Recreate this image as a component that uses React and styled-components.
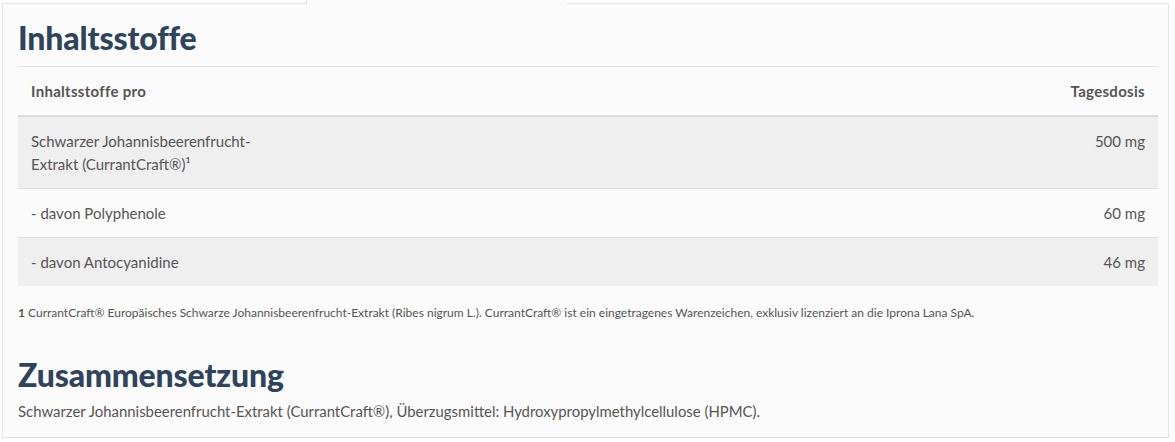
import React from "react";
import styled, { createGlobalStyle } from "styled-components";

const Global = createGlobalStyle`
  html, body { margin: 0; padding: 0; background: #ffffff; }
  body { font-family: Lato, "Noto Sans", sans-serif; color: #555555; }
`;

const Page = styled.div`
  width: 1175px;
  height: 442px;
  box-sizing: border-box;
  padding: 0 6px 0 2px;
  overflow: hidden;
`;

const TabBar = styled.div`
  display: flex;
  height: 4px;
`;

const Tab = styled.div`
  box-sizing: border-box;
  width: ${(p) => (p.$w ? `${p.$w}px` : "auto")};
  flex: ${(p) => (p.$w ? "none" : "1")};
  border-bottom: 1px solid ${(p) => (p.$active ? "transparent" : "#e4e4e4")};
  border-right: ${(p) => (p.$edge ? "1px solid #e4e4e4" : "none")};
  background: ${(p) => (p.$active ? "#fbfbfb" : "#ffffff")};
`;

const Panel = styled.section`
  box-sizing: border-box;
  border: 1px solid #e4e4e4;
  border-top: none;
  background: #fbfbfb;
  padding: 14px 10px 12px 15px;
  height: 434px;
`;

const Heading = styled.h2`
  margin: 0;
  font-family: Lato, "Noto Sans", sans-serif;
  font-weight: 900;
  font-size: 32px;
  line-height: 40px;
  color: #2d445c;
  letter-spacing: -0.15px;
`;

const Table = styled.table`
  width: 100%;
  border-collapse: collapse;
  margin-top: 8px;
  border-top: 1px solid #e2e2e2;
  font-size: 15px;
`;

const Th = styled.th`
  text-align: ${(p) => (p.$right ? "right" : "left")};
  font-weight: 700;
  font-size: 15px;
  letter-spacing: 0.3px;
  color: #555555;
  padding: 13px 13px 12px 13px;
  line-height: 23px;
  border-bottom: 2px solid #dcdcdc;
`;

const Row = styled.tr`
  background: ${(p) => (p.$shaded ? "#efefef" : "transparent")};
  border-top: 1px solid #e0e0e0;
`;

const Td = styled.td`
  text-align: ${(p) => (p.$right ? "right" : "left")};
  vertical-align: top;
  padding: 13px 13px 12px 13px;
  line-height: 23px;
  color: #555555;
`;

const NameCell = styled.span`
  display: inline-block;
  max-width: 262px;
`;

const Footnote = styled.p`
  margin: 19px 0 0 0;
  font-size: 12px;
  line-height: 16px;
  color: #555555;
`;

const Num = styled.b`
  font-weight: 700;
`;

const SubHeading = styled(Heading)`
  margin-top: 34px;
`;

const Body = styled.p`
  margin: 5px 0 0 0;
  font-size: 14.9px;
  line-height: 22px;
  color: #555555;
`;

const rows = [
  { name: "Schwarzer Johannisbeerenfrucht-Extrakt (CurrantCraft®)¹", dose: "500 mg" },
  { name: "- davon Polyphenole", dose: "60 mg" },
  { name: "- davon Antocyanidine", dose: "46 mg" },
];

export default function App() {
  return (
    <>
      <Global />
      <Page>
        <TabBar>
          <Tab $w={305} $edge />
          <Tab $w={260} $active />
          <Tab />
        </TabBar>
        <Panel>
          <Heading>Inhaltsstoffe</Heading>
          <Table>
            <thead>
              <tr>
                <Th>Inhaltsstoffe pro</Th>
                <Th $right>Tagesdosis</Th>
              </tr>
            </thead>
            <tbody>
              {rows.map((r, i) => (
                <Row key={i} $shaded={i % 2 === 0}>
                  <Td>
                    <NameCell>{r.name}</NameCell>
                  </Td>
                  <Td $right>{r.dose}</Td>
                </Row>
              ))}
            </tbody>
          </Table>
          <Footnote>
            <Num>1</Num> CurrantCraft® Europäisches Schwarze Johannisbeerenfrucht-Extrakt (Ribes nigrum L.). CurrantCraft® ist ein eingetragenes Warenzeichen, exklusiv lizenziert an die Iprona Lana SpA.
          </Footnote>
          <SubHeading>Zusammensetzung</SubHeading>
          <Body>
            Schwarzer Johannisbeerenfrucht-Extrakt (CurrantCraft®), Überzugsmittel: Hydroxypropylmethylcellulose (HPMC).
          </Body>
        </Panel>
      </Page>
    </>
  );
}
